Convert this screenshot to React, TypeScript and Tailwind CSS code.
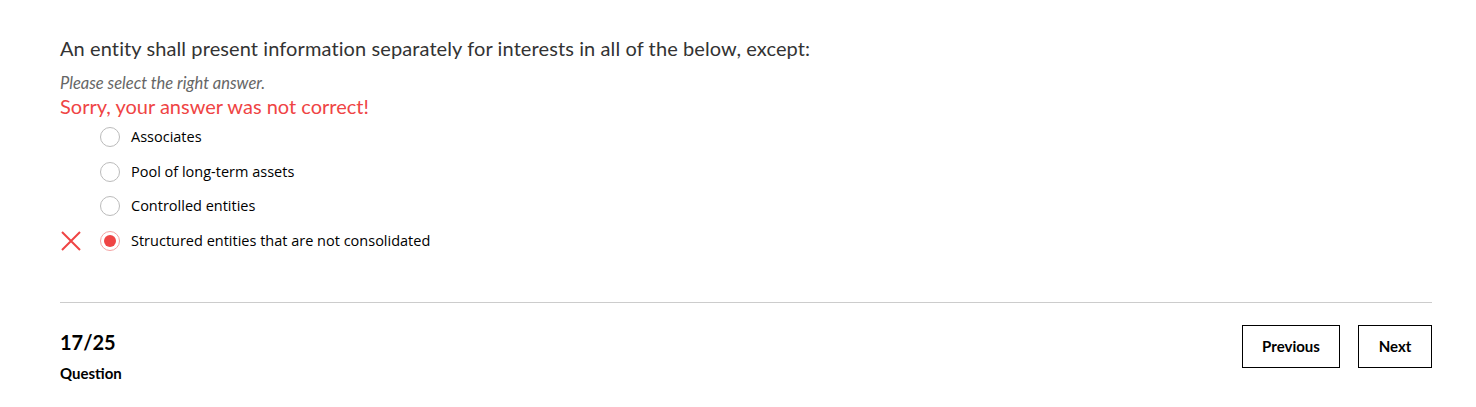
import React from 'react';

const options = [
    { id: 1, label: 'Associates' },
    { id: 2, label: 'Pool of long-term assets' },
    { id: 3, label: 'Controlled entities' },
    { id: 4, label: 'Structured entities that are not consolidated' },
];

const selectedId = 4;

const CrossIcon = () => (
    <svg width="22" height="22" viewBox="0 0 22 22" fill="none">
        <path d="M2 2 L20 20 M20 2 L2 20" stroke="#ef4444" strokeWidth="2" />
    </svg>
);

const App = () => {
    return (
        <div className="bg-white w-full min-h-[407px] pl-[60px] pr-[44px] pt-[36px]" style={{ fontFamily: 'Lato, "Noto Sans", sans-serif' }}>
            <h1 className="text-[20px] leading-[24px] tracking-[0.1px] text-[#333]">
                An entity shall present information separately for interests in all of the below, except:
            </h1>
            <p className="mt-[13px] text-[16.5px] leading-[20px] italic text-[#666]">Please select the right answer.</p>
            <p className="mt-[1px] text-[20px] leading-[24px] text-[#ef4444]">Sorry, your answer was not correct!</p>

            <div className="mt-[2px] flex flex-col" style={{ fontFamily: '"Open Sans", sans-serif' }}>
                {options.map(opt => {
                    const checked = opt.id === selectedId;
                    return (
                        <div key={opt.id} className="flex items-center h-[34.5px]">
                            <div className="w-[40px] flex items-center">
                                {checked && <CrossIcon />}
                            </div>
                            <span
                                className={`w-[20px] h-[20px] rounded-full border flex items-center justify-center ${checked ? 'border-[#f5a3a3]' : 'border-[#bbb]'}`}
                            >
                                {checked && <span className="w-[12px] h-[12px] rounded-full bg-[#ef4444]" />}
                            </span>
                            <span className="ml-[11px] text-[14.5px] text-black">{opt.label}</span>
                        </div>
                    );
                })}
            </div>

            <hr className="mt-[44px] border-t border-[#ccc]" />

            <div className="flex justify-between items-start mt-[22px]">
                <div className="pt-[4px]">
                    <div className="text-[20px] leading-[26px] font-bold text-black">17/25</div>
                    <div className="mt-[8px] text-[15px] leading-[20px] font-bold text-black">Question</div>
                </div>
                <div className="flex gap-[18px]">
                    <button className="w-[98px] h-[43px] border border-black text-[15px] font-bold text-black">Previous</button>
                    <button className="w-[74px] h-[43px] border border-black text-[15px] font-bold text-black">Next</button>
                </div>
            </div>
        </div>
    );
};

export default App;
